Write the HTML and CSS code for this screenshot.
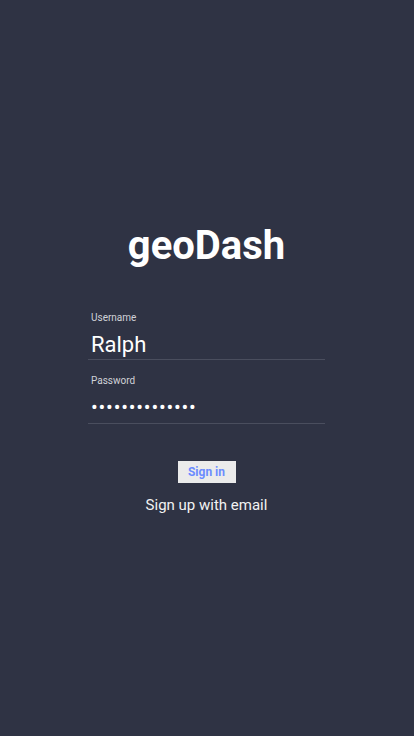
FILE: index.html
```html
<!DOCTYPE html>
<html>
<head>
<meta charset="utf-8">
<link rel="stylesheet" href="styles.css">
</head>
<body>
<main class="screen">
  <h1 class="title">geoDash</h1>
  <form class="form">
    <label class="field">
      <span class="label">Username</span>
      <span class="value">Ralph</span>
    </label>
    <label class="field">
      <span class="label">Password</span>
      <span class="value dots">••••••••••••••</span>
    </label>
  </form>
  <button class="signin">Sign in</button>
  <div class="signup">Sign up with email</div>
</main>
</body>
</html>
```

FILE: styles.css
```css
html, body {
  margin: 0;
  padding: 0;
  background: #2f3344;
  font-family: Roboto, "Liberation Sans", sans-serif;
  color: #ffffff;
}
.screen {
  width: 413px;
  height: 736px;
  display: flex;
  flex-direction: column;
  align-items: center;
}
.title {
  margin: 221px 0 0 0;
  font-size: 40px;
  font-weight: 700;
  line-height: 50px;
  color: #ffffff;
}
.form {
  margin-top: 41px;
  width: 237px;
  display: flex;
  flex-direction: column;
}
.field {
  display: flex;
  flex-direction: column;
  padding: 0 3px;
  border-bottom: 1px solid #4a4e5e;
}
.field + .field {
  margin-top: 15px;
}
.label {
  font-size: 10px;
  line-height: 12px;
  margin-bottom: 6px;
  color: #d0d2d8;
}
.value {
  font-size: 22px;
  line-height: 29px;
  color: #ffffff;
}
.dots {
  font-size: 20px;
  line-height: 28px;
  padding-bottom: 2px;
  letter-spacing: 0.8px;
}
.signin {
  margin-top: 37px;
  width: 58px;
  height: 22px;
  border: none;
  padding: 0;
  background: #ebebeb;
  color: #6b8cff;
  font-family: Roboto, "Liberation Sans", sans-serif;
  font-weight: 700;
  font-size: 12px;
}
.signup {
  margin-top: 12px;
  font-size: 15px;
  line-height: 20px;
  color: #f2f2f2;
}
```
